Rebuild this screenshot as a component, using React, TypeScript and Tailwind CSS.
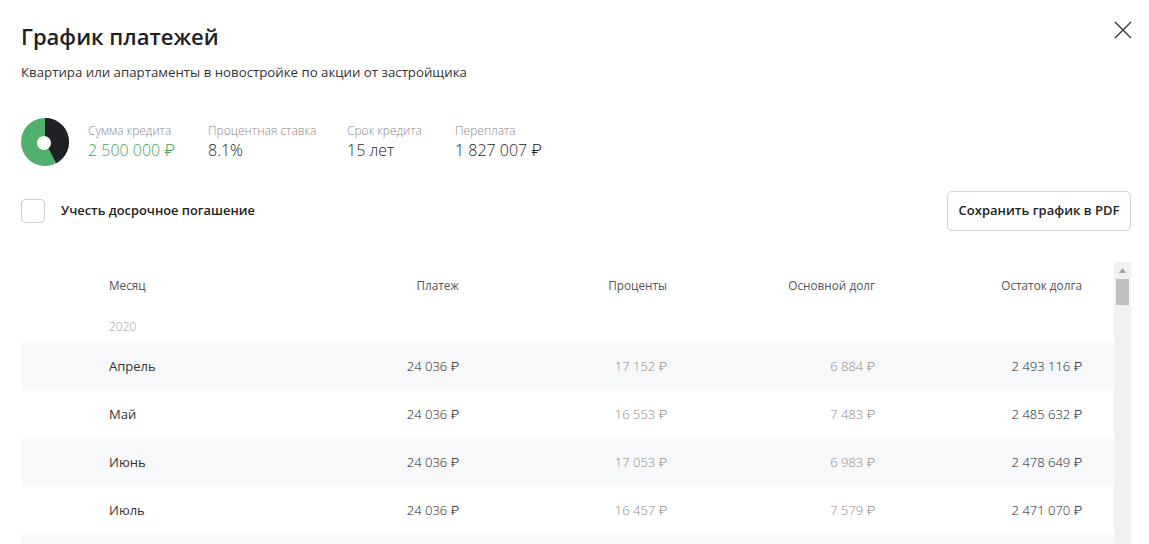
import React from 'react'

type Row = {
  month: string
  payment: string
  interest: string
  principal: string
  balance: string
}

const rows: Row[] = [
  { month: 'Апрель', payment: '24 036 ₽', interest: '17 152 ₽', principal: '6 884 ₽', balance: '2 493 116 ₽' },
  { month: 'Май', payment: '24 036 ₽', interest: '16 553 ₽', principal: '7 483 ₽', balance: '2 485 632 ₽' },
  { month: 'Июнь', payment: '24 036 ₽', interest: '17 053 ₽', principal: '6 983 ₽', balance: '2 478 649 ₽' },
  { month: 'Июль', payment: '24 036 ₽', interest: '16 457 ₽', principal: '7 579 ₽', balance: '2 471 070 ₽' },
  { month: 'Август', payment: '24 036 ₽', interest: '16 404 ₽', principal: '7 632 ₽', balance: '2 463 438 ₽' },
]

const cols = 'grid grid-cols-[142px_208px_208px_208px_208px] pl-[88px]'

function Donut() {
  // dark share = overpayment / (credit + overpayment)
  const share = 1827007 / (2500000 + 1827007)
  const a = share * Math.PI * 2
  const r = 24
  const x = 24 + r * Math.sin(a)
  const y = 24 - r * Math.cos(a)
  return (
    <svg width="48" height="48" viewBox="0 0 48 48">
      <circle cx="24" cy="24" r="24" fill="#52b06d" />
      <path d={`M24 24 L24 0 A24 24 0 0 1 ${x} ${y} Z`} fill="#202124" />
      <circle cx="23" cy="25" r="7" fill="#fff" />
    </svg>
  )
}

function Stat({ label, value, green }: { label: string; value: string; green?: boolean }) {
  return (
    <div className="flex flex-col">
      <span className="text-[12px] leading-[16px] font-light text-[#8a8a8a]">{label}</span>
      <span className={`text-[16px] leading-[22px] font-light ${green ? 'text-[#3fa35c]' : 'text-[#222]'}`}>{value}</span>
    </div>
  )
}

export default function App() {
  return (
    <div className="relative w-[1149px] h-[544px] overflow-hidden bg-white font-['Open_Sans','Roboto','Noto_Sans',sans-serif] text-[#222]">
      <button className="absolute right-[17px] top-[21px] w-[18px] h-[18px] text-[#333]">
        <svg width="18" height="18" viewBox="0 0 18 18" fill="none" stroke="currentColor" strokeWidth="1.3">
          <path d="M1 1 L17 17 M17 1 L1 17" />
        </svg>
      </button>

      <div className="px-[21px] pt-[22px]">
        <h1 className="text-[22px] leading-[28px] font-semibold text-[#1f1f1f]">График платежей</h1>
        <p className="mt-[13px] text-[13.25px] leading-[18px] text-[#333]">
          Квартира или апартаменты в новостройке по акции от застройщика
        </p>

        <div className="mt-[37px] flex items-center">
          <Donut />
          <div className="ml-[19px] flex">
            <div className="w-[120px]"><Stat label="Сумма кредита" value="2 500 000 ₽" green /></div>
            <div className="w-[139px]"><Stat label="Процентная ставка" value="8.1%" /></div>
            <div className="w-[108px]"><Stat label="Срок кредита" value="15 лет" /></div>
            <div><Stat label="Переплата" value="1 827 007 ₽" /></div>
          </div>
        </div>

        <div className="mt-[25px] flex items-center justify-between">
          <label className="flex items-center">
            <span className="w-[24px] h-[24px] rounded-[4px] border border-[#cfcfcf] bg-white" />
            <span className="ml-[16px] text-[12.85px] font-semibold text-[#222]">Учесть досрочное погашение</span>
          </label>
          <button className="mr-[-3px] h-[40px] w-[184px] rounded-[5px] border border-[#d3d3d3] text-[13px] font-semibold text-[#222]">
            Сохранить график в PDF
          </button>
        </div>
      </div>

      <div className="mt-[31px] ml-[21px] flex">
        <div className="w-[1092px]">
          <div className={`${cols} h-[48px] items-center text-[11.75px] text-[#555]`}>
            <span>Месяц</span>
            <span className="text-right">Платеж</span>
            <span className="text-right">Проценты</span>
            <span className="text-right">Основной долг</span>
            <span className="text-right pr-[1px]">Остаток долга</span>
          </div>
          <div className="pl-[88px] h-[33px] flex items-center text-[12px] text-[#a0a0a0] font-light">2020</div>
          {rows.map((row, i) => (
            <div
              key={row.month}
              className={`${cols} h-[48px] items-center text-[13px] ${i % 2 === 0 ? 'bg-[#f7f8fa]' : 'bg-white'}`}
            >
              <span className="text-[#333]">{row.month}</span>
              <span className="text-right font-light text-[#222]">{row.payment}</span>
              <span className="text-right font-light text-[#8c8c8c]">{row.interest}</span>
              <span className="text-right font-light text-[#8c8c8c]">{row.principal}</span>
              <span className="text-right font-light text-[#222] pr-[1px]">{row.balance}</span>
            </div>
          ))}
        </div>
        <div className="ml-[1px] w-[17px] bg-[#f1f1f1] flex flex-col items-center">
          <svg width="7" height="5" viewBox="0 0 7 5" className="mt-[6px]">
            <path d="M0 5 L3.5 0 L7 5 Z" fill="#a3a3a3" />
          </svg>
          <div className="mt-[6px] w-[13px] h-[26px] bg-[#c1c1c1]" />
        </div>
      </div>
    </div>
  )
}
